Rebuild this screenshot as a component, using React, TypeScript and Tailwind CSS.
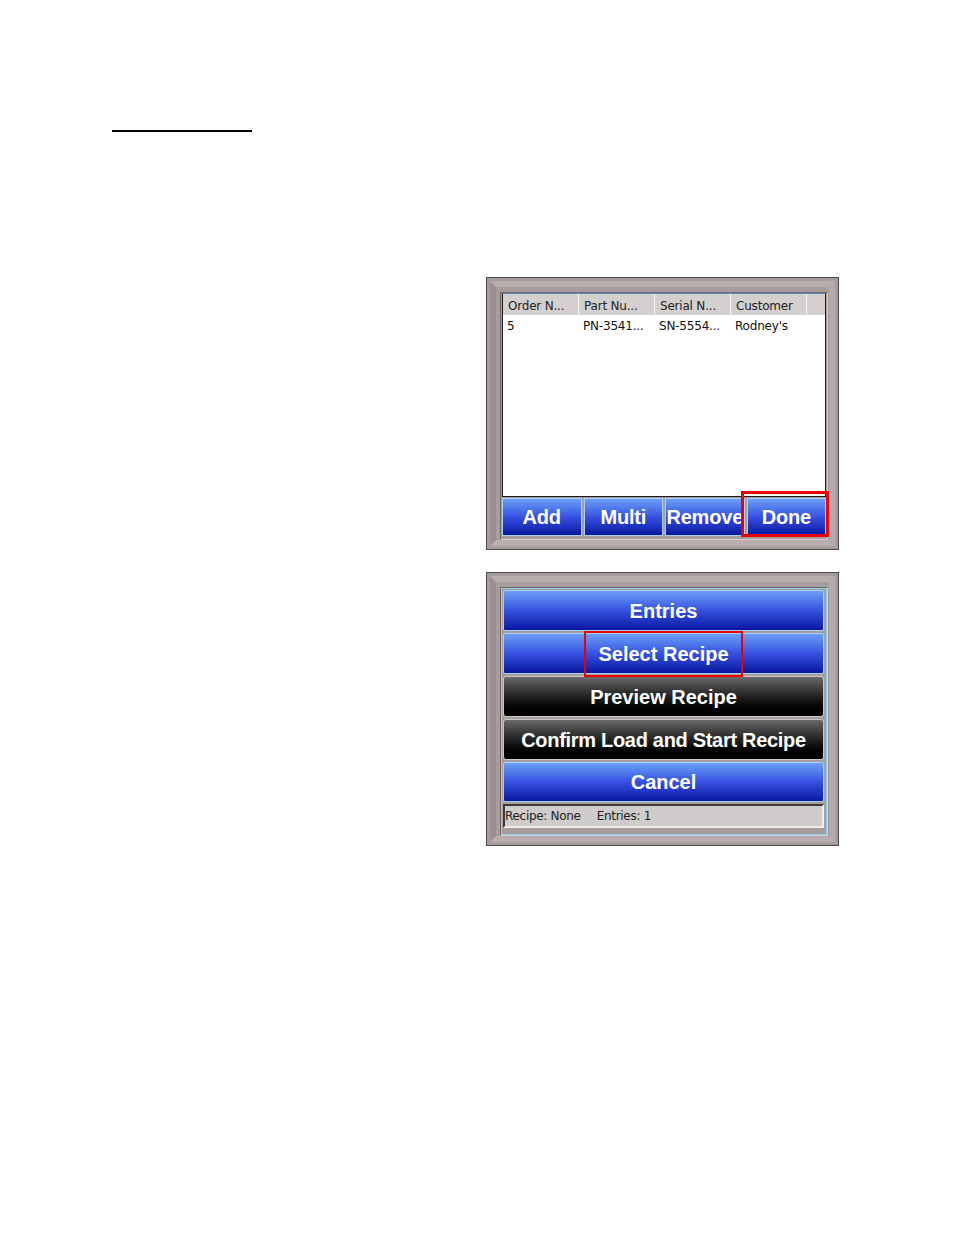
import React from 'react';

const blueBtn =
  'bg-gradient-to-b from-[#6e9ef4] via-[#3850e2] to-[#0a14a0] text-white font-bold border border-[#9fd3f0]';
const blackBtn =
  'bg-gradient-to-b from-[#6a6a6a] via-[#222222] to-[#000000] text-white font-bold border border-[#c8c8c8]';

const Frame: React.FC<{ children: React.ReactNode; height: string }> = ({ children, height }) => (
  <div className={`w-[353px] ${height} border border-[#4a4a4a] bg-[#a79b9b] p-[3px]`}>
    <div className="h-full border-[6px] border-t-[#b8adad] border-l-[#9a8e8e] border-r-[#b5aaaa] border-b-[#b8aeae] bg-[#a89d9d] pt-[5px] pl-[4px] pr-[1px]">
      <div className="h-full border border-t-[#6e6464] border-l-[#6e6464] border-r-[#d6cdcd] border-b-[#d6cdcd]">
        {children}
      </div>
    </div>
  </div>
);

const columns = ['Order N...', 'Part Nu...', 'Serial N...', 'Customer'];
const row = ['5', 'PN-3541...', 'SN-5554...', "Rodney's"];

const App: React.FC = () => {
  return (
    <div className="w-[954px] h-[1235px] bg-white font-['DejaVu_Sans',sans-serif] pt-[130px]">
      <div className="ml-[112px] w-[140px] h-[2px] bg-black" />

      <div className="ml-[486px] mt-[145px]">
        <Frame height="h-[273px]">
          <div className="h-full flex flex-col bg-[#a89d9d] px-[1px]">
            <div className="h-[204px] bg-white border border-[#1a1a1a] border-t-[#5b8fc0]">
              <div className="flex h-[21px] bg-[#d4d0d0] text-[12px] text-[#222] tracking-[-0.2px]">
                {columns.map((c) => (
                  <div key={c} className="w-[76px] border-r border-[#f4f4f4] pl-[5px] flex items-center pt-[2px]">
                    {c}
                  </div>
                ))}
                <div className="flex-1" />
              </div>
              <div className="flex text-[12px] text-[#111] h-[20px] items-center tracking-[-0.2px] pt-[1px]">
                {row.map((c, i) => (
                  <div key={i} className="w-[76px] pl-[4px]">
                    {c}
                  </div>
                ))}
              </div>
            </div>
            <div className="flex gap-[2px] mt-[1px] h-[38px] relative">
              {['Add', 'Multi', 'Remove', 'Done'].map((b) => (
                <div
                  key={b}
                  className={`flex-1 flex items-center justify-center text-[20px] font-['Liberation_Sans',sans-serif] tracking-[-0.2px] ${blueBtn}`}
                >
                  {b}
                </div>
              ))}
              <div className="absolute right-[-3px] top-[-7px] w-[88px] h-[46px] border-[3px] border-[#ee0000]" />
            </div>
          </div>
        </Frame>

        <div className="mt-[22px]">
          <Frame height="h-[274px]">
            <div className="h-full flex flex-col gap-[2px] bg-[#a89d9d] pl-[1px] pr-[2px] pt-[1px] border border-[#8fd0ee]">
              <div className={`h-[41px] flex items-center justify-center text-[20px] font-['Liberation_Sans',sans-serif] rounded-[2px] ${blueBtn}`}>
                Entries
              </div>
              <div className={`h-[41px] relative flex items-center justify-center text-[20px] font-['Liberation_Sans',sans-serif] rounded-[2px] ${blueBtn}`}>
                Select Recipe
                <div className="absolute left-[80px] top-[-3px] w-[159px] h-[46px] border-[2px] border-[#ee0000]" />
              </div>
              <div className={`h-[41px] flex items-center justify-center text-[20px] font-['Liberation_Sans',sans-serif] rounded-[3px] ${blackBtn}`}>
                Preview Recipe
              </div>
              <div className={`h-[41px] flex items-center justify-center text-[20px] font-['Liberation_Sans',sans-serif] rounded-[3px] tracking-[-0.3px] ${blackBtn}`}>
                Confirm Load and Start Recipe
              </div>
              <div className={`h-[40px] flex items-center justify-center text-[20px] font-['Liberation_Sans',sans-serif] rounded-[2px] ${blueBtn}`}>
                Cancel
              </div>
              <div className="h-[24px] bg-[#d0cccc] border-2 border-t-[#3a3a3a] border-l-[#3a3a3a] border-r-[#eeeeee] border-b-[#eeeeee] flex items-center text-[12px] text-[#222] tracking-[-0.3px]">
                <span>Recipe: None</span>
                <span className="ml-[16px]">Entries: 1</span>
              </div>
            </div>
          </Frame>
        </div>
      </div>
    </div>
  );
};

export default App;
